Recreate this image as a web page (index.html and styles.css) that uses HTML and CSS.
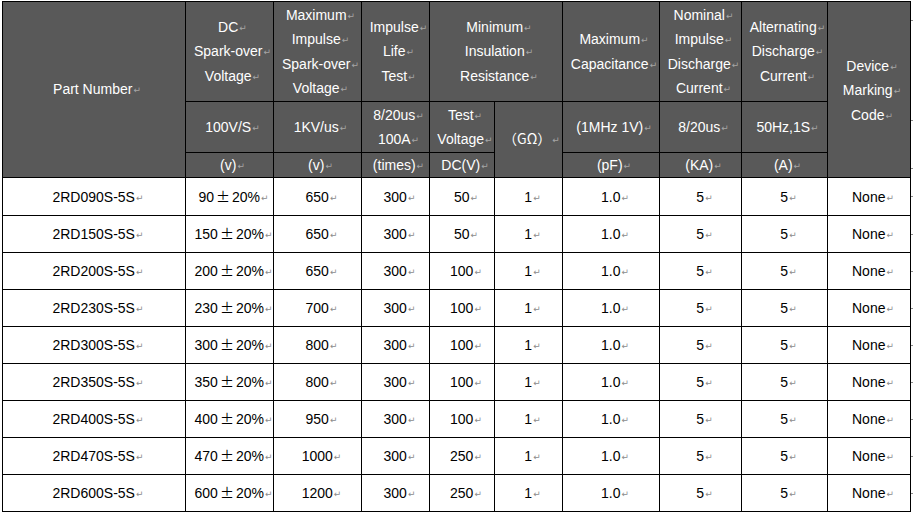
FILE: index.html
```html
<!DOCTYPE html>
<html lang="en">
<head>
<meta charset="utf-8">
<title>2RD Series Specifications</title>
<link rel="stylesheet" href="styles.css">
</head>
<body>
<table class="spec">
  <colgroup>
    <col class="c-part">
    <col class="c-dc">
    <col class="c-max">
    <col class="c-life">
    <col class="c-test">
    <col class="c-gohm">
    <col class="c-cap">
    <col class="c-nom">
    <col class="c-alt">
    <col class="c-code">
    <col class="c-eor">
  </colgroup>
  <thead>
    <tr class="hr1">
      <th rowspan="3">Part Number<span class="pm">↵</span></th>
      <th>DC<span class="pm">↵</span><br>Spark-over<span class="pm">↵</span><br>Voltage<span class="pm">↵</span></th>
      <th>Maximum<span class="pm">↵</span><br>Impulse<span class="pm">↵</span><br>Spark-over<span class="pm">↵</span><br>Voltage<span class="pm">↵</span></th>
      <th>Impulse<span class="pm">↵</span><br>Life<span class="pm">↵</span><br>Test<span class="pm">↵</span></th>
      <th colspan="2">Minimum<span class="pm">↵</span><br>Insulation<span class="pm">↵</span><br>Resistance<span class="pm">↵</span></th>
      <th>Maximum<span class="pm">↵</span><br>Capacitance<span class="pm">↵</span></th>
      <th>Nominal<span class="pm">↵</span><br>Impulse<span class="pm">↵</span><br>Discharge<span class="pm">↵</span><br>Current<span class="pm">↵</span></th>
      <th>Alternating<span class="pm">↵</span><br>Discharge<span class="pm">↵</span><br>Current<span class="pm">↵</span></th>
      <th rowspan="3" class="code">Device<span class="pm">↵</span><br>Marking<span class="pm">↵</span><br>Code<span class="pm">↵</span></th>
      <td class="eor"><i class="dot"></i></td>
    </tr>
    <tr class="hr2">
      <th>100V/S<span class="pm">↵</span></th>
      <th>1KV/us<span class="pm">↵</span></th>
      <th>8/20us<span class="pm">↵</span><br>100A<span class="pm">↵</span></th>
      <th>Test<span class="pm">↵</span><br>Voltage<span class="pm">↵</span></th>
      <th rowspan="2"><span class="cjk">（GΩ）</span><span class="pm">↵</span></th>
      <th>(1MHz 1V)<span class="pm">↵</span></th>
      <th>8/20us<span class="pm">↵</span></th>
      <th>50Hz,1S<span class="pm">↵</span></th>
      <td class="eor"><i class="dot"></i></td>
    </tr>
    <tr class="hr3">
      <th>(v)<span class="pm">↵</span></th>
      <th>(v)<span class="pm">↵</span></th>
      <th>(times)<span class="pm">↵</span></th>
      <th>DC(V)<span class="pm">↵</span></th>
      <th>(pF)<span class="pm">↵</span></th>
      <th>(KA)<span class="pm">↵</span></th>
      <th>(A)<span class="pm">↵</span></th>
      <td class="eor"><i class="dot"></i></td>
    </tr>
  </thead>
  <tbody>
    <tr class="first">
      <td>2RD090S-5S<span class="pm">↵</span></td><td>90<span class="pmn">±</span>20%<span class="pm">↵</span></td><td>650<span class="pm">↵</span></td><td>300<span class="pm">↵</span></td><td>50<span class="pm">↵</span></td><td>1<span class="pm">↵</span></td><td>1.0<span class="pm">↵</span></td><td>5<span class="pm">↵</span></td><td>5<span class="pm">↵</span></td><td>None<span class="pm">↵</span></td><td class="eor"><i class="dot"></i></td>
    </tr>
    <tr>
      <td>2RD150S-5S<span class="pm">↵</span></td><td>150<span class="pmn">±</span>20%<span class="pm">↵</span></td><td>650<span class="pm">↵</span></td><td>300<span class="pm">↵</span></td><td>50<span class="pm">↵</span></td><td>1<span class="pm">↵</span></td><td>1.0<span class="pm">↵</span></td><td>5<span class="pm">↵</span></td><td>5<span class="pm">↵</span></td><td>None<span class="pm">↵</span></td><td class="eor"><i class="dot"></i></td>
    </tr>
    <tr>
      <td>2RD200S-5S<span class="pm">↵</span></td><td>200<span class="pmn">±</span>20%<span class="pm">↵</span></td><td>650<span class="pm">↵</span></td><td>300<span class="pm">↵</span></td><td>100<span class="pm">↵</span></td><td>1<span class="pm">↵</span></td><td>1.0<span class="pm">↵</span></td><td>5<span class="pm">↵</span></td><td>5<span class="pm">↵</span></td><td>None<span class="pm">↵</span></td><td class="eor"><i class="dot"></i></td>
    </tr>
    <tr>
      <td>2RD230S-5S<span class="pm">↵</span></td><td>230<span class="pmn">±</span>20%<span class="pm">↵</span></td><td>700<span class="pm">↵</span></td><td>300<span class="pm">↵</span></td><td>100<span class="pm">↵</span></td><td>1<span class="pm">↵</span></td><td>1.0<span class="pm">↵</span></td><td>5<span class="pm">↵</span></td><td>5<span class="pm">↵</span></td><td>None<span class="pm">↵</span></td><td class="eor"><i class="dot"></i></td>
    </tr>
    <tr>
      <td>2RD300S-5S<span class="pm">↵</span></td><td>300<span class="pmn">±</span>20%<span class="pm">↵</span></td><td>800<span class="pm">↵</span></td><td>300<span class="pm">↵</span></td><td>100<span class="pm">↵</span></td><td>1<span class="pm">↵</span></td><td>1.0<span class="pm">↵</span></td><td>5<span class="pm">↵</span></td><td>5<span class="pm">↵</span></td><td>None<span class="pm">↵</span></td><td class="eor"><i class="dot"></i></td>
    </tr>
    <tr>
      <td>2RD350S-5S<span class="pm">↵</span></td><td>350<span class="pmn">±</span>20%<span class="pm">↵</span></td><td>800<span class="pm">↵</span></td><td>300<span class="pm">↵</span></td><td>100<span class="pm">↵</span></td><td>1<span class="pm">↵</span></td><td>1.0<span class="pm">↵</span></td><td>5<span class="pm">↵</span></td><td>5<span class="pm">↵</span></td><td>None<span class="pm">↵</span></td><td class="eor"><i class="dot"></i></td>
    </tr>
    <tr>
      <td>2RD400S-5S<span class="pm">↵</span></td><td>400<span class="pmn">±</span>20%<span class="pm">↵</span></td><td>950<span class="pm">↵</span></td><td>300<span class="pm">↵</span></td><td>100<span class="pm">↵</span></td><td>1<span class="pm">↵</span></td><td>1.0<span class="pm">↵</span></td><td>5<span class="pm">↵</span></td><td>5<span class="pm">↵</span></td><td>None<span class="pm">↵</span></td><td class="eor"><i class="dot"></i></td>
    </tr>
    <tr>
      <td>2RD470S-5S<span class="pm">↵</span></td><td>470<span class="pmn">±</span>20%<span class="pm">↵</span></td><td>1000<span class="pm">↵</span></td><td>300<span class="pm">↵</span></td><td>250<span class="pm">↵</span></td><td>1<span class="pm">↵</span></td><td>1.0<span class="pm">↵</span></td><td>5<span class="pm">↵</span></td><td>5<span class="pm">↵</span></td><td>None<span class="pm">↵</span></td><td class="eor"><i class="dot"></i></td>
    </tr>
    <tr>
      <td>2RD600S-5S<span class="pm">↵</span></td><td>600<span class="pmn">±</span>20%<span class="pm">↵</span></td><td>1200<span class="pm">↵</span></td><td>300<span class="pm">↵</span></td><td>250<span class="pm">↵</span></td><td>1<span class="pm">↵</span></td><td>1.0<span class="pm">↵</span></td><td>5<span class="pm">↵</span></td><td>5<span class="pm">↵</span></td><td>None<span class="pm">↵</span></td><td class="eor"><i class="dot"></i></td>
    </tr>
  </tbody>
</table>
</body>
</html>
```
FILE: styles.css
```css
html {
  overflow: hidden;
  background: #ffffff;
}

body {
  margin: 0;
  padding: 1px 0 0 2px;
  font-family: "Liberation Sans", Arial, sans-serif;
  font-size: 14px;
  color: #000000;
}

.spec {
  border-collapse: collapse;
  table-layout: fixed;
  width: 929px;
}

.c-part { width: 183px; }
.c-dc { width: 88px; }
.c-max { width: 88px; }
.c-life { width: 68px; }
.c-test { width: 65px; }
.c-gohm { width: 68px; }
.c-cap { width: 97px; }
.c-nom { width: 82px; }
.c-alt { width: 86px; }
.c-code { width: 83px; }
.c-eor { width: 21px; }

.spec th,
.spec td {
  border: 1px solid #000000;
  padding: 0 0 0 8px;
  text-align: center;
  vertical-align: middle;
  white-space: nowrap;
  overflow: hidden;
}

.spec th {
  background: #595959;
  color: #ffffff;
  font-weight: normal;
  line-height: 24.5px;
  padding-left: 6px;
}

.hr3 th {
  line-height: 22px;
}

.spec td {
  line-height: 18px;
}

.hr1 { height: 100px; }
.hr2 { height: 51px; }
.hr3 { height: 25px; }
.spec tbody tr { height: 37px; }
.spec tbody tr.first { height: 38px; }

.spec .code {
  padding-top: 2px;
}

.pm {
  font-family: "DejaVu Sans", sans-serif;
  font-size: 9px;
  line-height: 0;
  color: #8c8c8c;
  margin-left: 1px;
  vertical-align: 1px;
}

.spec th .pm {
  color: #a6a6a6;
}

.pmn {
  display: inline-block;
  width: 18px;
  line-height: 0;
  text-align: center;
  font-family: "Noto Sans CJK SC", sans-serif;
  font-feature-settings: "fwid";
  font-size: 14px;
}

.cjk {
  font-family: "Noto Sans CJK SC", sans-serif;
  line-height: 0;
}

.spec td.eor {
  border: none;
  background: transparent;
  text-align: left;
  vertical-align: top;
  padding: 14px 0 0 0;
  line-height: 1px;
}

.hr3 td.eor {
  padding-top: 11px;
}

.dot {
  display: inline-block;
  width: 2px;
  height: 1px;
  background: #8c8c8c;
}
```
